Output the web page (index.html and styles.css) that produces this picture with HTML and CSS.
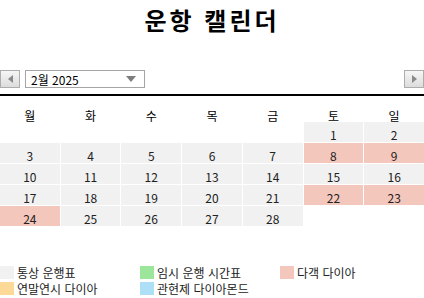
FILE: index.html
```html
<!DOCTYPE html>
<html lang="ko">
<head>
<meta charset="utf-8">
<link rel="stylesheet" href="styles.css">
</head>
<body>
<h1 class="title">운항 캘린더</h1>
<div class="nav">
  <div class="left-group">
    <button class="navbtn"><span class="tri tri-left"></span></button>
    <div class="select"><span>2월 2025</span><span class="tri tri-down"></span></div>
  </div>
  <button class="navbtn"><span class="tri tri-right"></span></button>
</div>
<div class="rule"></div>
<div class="cal">
  <div class="wd">월</div><div class="wd">화</div><div class="wd">수</div><div class="wd">목</div><div class="wd">금</div><div class="wd">토</div><div class="wd">일</div>
  <div class="empty"></div><div class="empty"></div><div class="empty"></div><div class="empty"></div><div class="empty"></div><div class="day">1</div><div class="day">2</div>
  <div class="day">3</div><div class="day">4</div><div class="day">5</div><div class="day">6</div><div class="day">7</div><div class="day pink">8</div><div class="day pink">9</div>
  <div class="day">10</div><div class="day">11</div><div class="day">12</div><div class="day">13</div><div class="day">14</div><div class="day">15</div><div class="day">16</div>
  <div class="day">17</div><div class="day">18</div><div class="day">19</div><div class="day">20</div><div class="day">21</div><div class="day pink">22</div><div class="day pink">23</div>
  <div class="day pink">24</div><div class="day">25</div><div class="day">26</div><div class="day">27</div><div class="day">28</div><div class="empty"></div><div class="empty"></div>
</div>
<div class="legend">
  <div class="item"><span class="sw sw-gray"></span>통상 운행표</div>
  <div class="item"><span class="sw sw-green"></span>임시 운행 시간표</div>
  <div class="item"><span class="sw sw-pink"></span>다객 다이아</div>
  <div class="item"><span class="sw sw-orange"></span>연말연시 다이아</div>
  <div class="item"><span class="sw sw-blue"></span>관현제 다이아몬드</div>
</div>
</body>
</html>
```
FILE: styles.css
```css
body {
  margin: 0;
  font-family: "Noto Sans CJK KR", "Noto Sans", sans-serif;
  font-size: 12px;
  color: #222;
  background: #fff;
}
.title {
  margin: 0;
  height: 40px;
  line-height: 40px;
  text-align: center;
  font-size: 24px;
  font-weight: bold;
  letter-spacing: 3px;
  color: #000;
}
.nav {
  margin-top: 30px;
  height: 18px;
  display: flex;
  justify-content: space-between;
  align-items: stretch;
}
.left-group {
  display: flex;
  gap: 5px;
}
.navbtn {
  width: 20px;
  height: 18px;
  padding: 0;
  margin: 0;
  border: 1px solid #adadad;
  background: linear-gradient(#f6f6f6, #dcdcdc);
  display: flex;
  align-items: center;
  justify-content: center;
  box-sizing: border-box;
}
.tri {
  display: block;
  width: 0;
  height: 0;
}
.tri-left {
  border-top: 4px solid transparent;
  border-bottom: 4px solid transparent;
  border-right: 5px solid #8a8a8a;
}
.tri-right {
  border-top: 4px solid transparent;
  border-bottom: 4px solid transparent;
  border-left: 5px solid #8a8a8a;
}
.tri-down {
  border-left: 5px solid transparent;
  border-right: 5px solid transparent;
  border-top: 6px solid #7d7d7d;
}
.select {
  width: 120px;
  height: 18px;
  box-sizing: border-box;
  border: 1px solid #a5a5a5;
  background: #fff;
  display: flex;
  align-items: center;
  justify-content: space-between;
  padding: 0 8px 0 5px;
  font-size: 12px;
  color: #000;
}
.rule {
  margin-top: 6px;
  height: 2px;
  background: #000;
}
.cal {
  display: grid;
  grid-template-columns: repeat(7, 1fr);
  grid-auto-rows: 20px;
  grid-template-rows: 25px;
  gap: 1px;
}
.wd {
  text-align: center;
  padding-top: 12px;
  line-height: 16px;
  color: #000;
}
.day {
  background: #f1f1f1;
  text-align: center;
  padding-top: 5px;
  line-height: 16px;
  color: #222;
}
.day.pink {
  background: #f4c7bc;
}
.legend {
  margin-top: 40px;
  display: grid;
  grid-template-columns: 140px 140px 140px;
  row-gap: 3px;
}
.item {
  display: flex;
  align-items: center;
  gap: 3px;
  height: 13px;
  color: #222;
}
.sw {
  width: 14px;
  height: 13px;
  display: block;
}
.sw-gray { background: #f1f1f1; }
.sw-green { background: #9be69b; }
.sw-pink { background: #f4c7bc; }
.sw-orange { background: #fdd997; }
.sw-blue { background: #ade0f7; }
```
